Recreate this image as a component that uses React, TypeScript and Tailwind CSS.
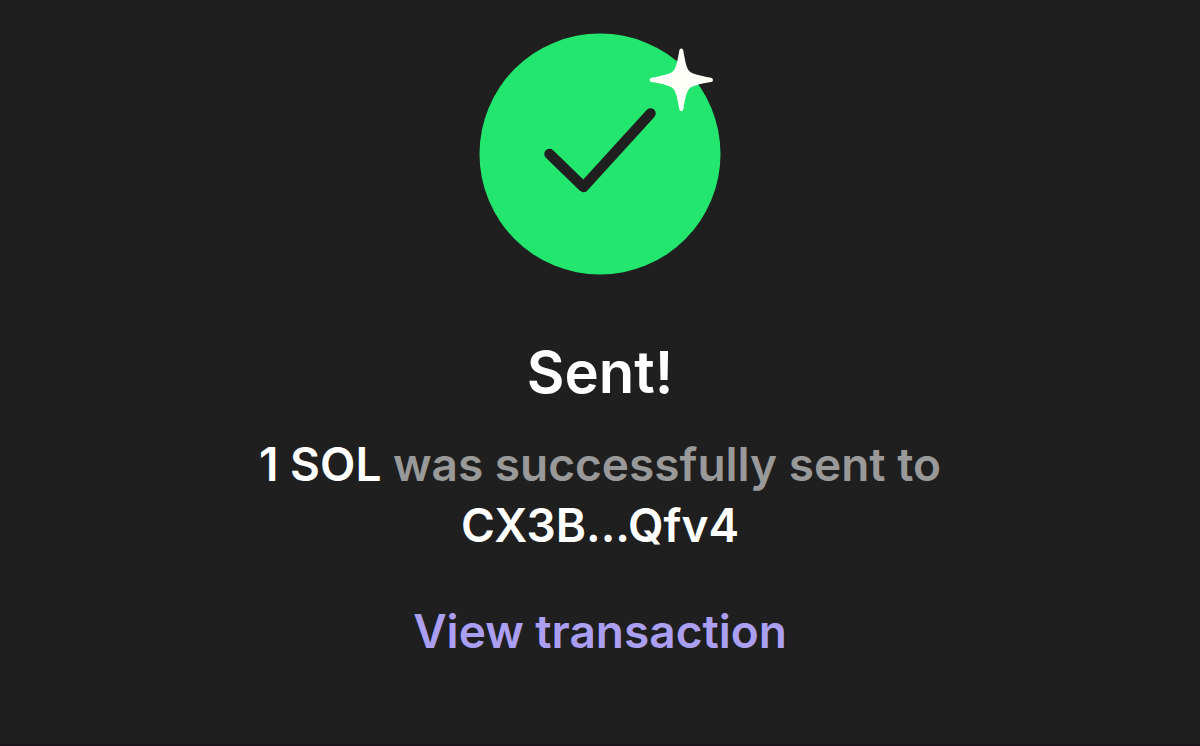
function SuccessBadge() {
  return (
    <svg
      viewBox="0 0 242 242"
      className="size-[242px] shrink-0 overflow-visible"
      role="img"
      aria-label="Success"
    >
      <circle cx="121" cy="121" r="120.5" fill="#23e66f" />
      <path
        d="M70.5 121 L104.5 154 L171.5 80.5"
        fill="none"
        stroke="#1f1f1f"
        strokeWidth="10.5"
        strokeLinecap="round"
        strokeLinejoin="round"
      />
      {/* Sparkle */}
      <path
        d="M202.3 15.500 Q203.900 15.500 204.300 17.500 C206.500 31 208 36 210.500 38.300 C213 40.800 219 42.500 232 44.800 Q234 45.200 234 46.900 Q234 48.600 232 49 C219 51.200 213 53 210.500 55.500 C208 58 206.500 63 204.300 76.300 Q203.900 78.300 202.300 78.300 Q200.700 78.300 200.300 76.300 C198 63 196.500 58 194 55.500 C191.500 53 185.500 51.200 172.600 49 Q170.600 48.600 170.600 46.900 Q170.600 45.200 172.600 44.800 C185.500 42.500 191.500 40.800 194 38.300 C196.500 36 198 31 200.300 17.500 Q200.700 15.500 202.300 15.500 Z"
        fill="#fffffa"
      />
    </svg>
  );
}

export default function App() {
  return (
    <main className="flex min-h-screen flex-col items-center border-b-2 border-[#1a171a] bg-[#1f1f1f] px-6 pt-[33px] text-center font-['Inter',sans-serif] text-white">
      <SuccessBadge />

      <h1 className="mt-[62px] text-[58px] leading-[70px] font-semibold">Sent!</h1>

      <p className="mt-[27px] max-w-[720px] text-[46px] leading-[61px] font-semibold text-[#999999]">
        <span className="text-white">1 SOL</span> was successfully sent to{" "}
        <span className="text-white">CX3B...Qfv4</span>
      </p>

      <a href="#transaction" className="mt-[45px] text-[46px] leading-[61px] font-semibold text-[#ab9ff2]">
        View transaction
      </a>
    </main>
  );
}
